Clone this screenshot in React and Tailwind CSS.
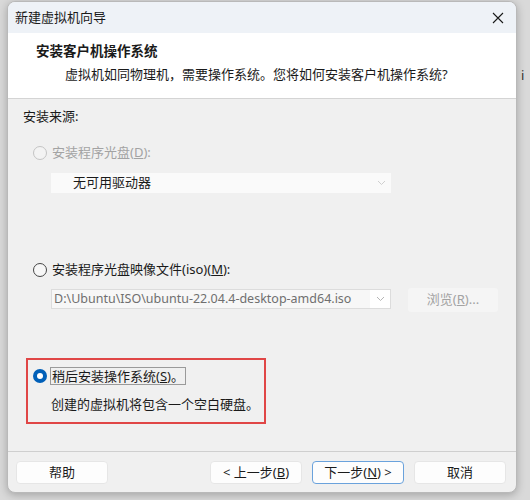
import React from 'react';

const font = { fontFamily: '"Segoe UI", "Noto Sans", "Noto Sans CJK SC", sans-serif' };

function Radio({ checked, disabled }) {
    if (checked) {
        return (
            <span className="w-[14px] h-[14px] rounded-full bg-[#005fb8] flex items-center justify-center shrink-0">
                <span className="w-[6px] h-[6px] rounded-full bg-white"></span>
            </span>
        );
    }
    return (
        <span
            className={
                "w-[14px] h-[14px] rounded-full border shrink-0 " +
                (disabled ? "border-[#c4c4c4] bg-[#f3f3f3]" : "border-[#454545] bg-[#f7f7f7]")
            }
        ></span>
    );
}

function Chevron({ color = "#b5b5b5" }) {
    return (
        <svg width="9" height="6" viewBox="0 0 9 6" fill="none">
            <path d="M1 1l3.5 3.5L8 1" stroke={color} strokeWidth="1" />
        </svg>
    );
}

function Btn({ children, focused }) {
    return (
        <button
            className={
                "h-[23px] w-[92px] rounded-[4px] bg-[#fdfdfd] text-[13px] text-[#1b1b1b] flex items-center justify-center border " +
                (focused ? "border-[#6aa2dc]" : "border-[#e6e6e6]")
            }
        >
            {children}
        </button>
    );
}

export default function App() {
    return (
        <div className="relative w-[530px] h-[500px] bg-[#d9d9d9] overflow-hidden pt-[1px]" style={font}>
            <span className="absolute left-[521px] top-[66px] text-[13px] text-[#333]">i</span>
            <div className="relative ml-[7px] w-[510px] h-[492px] rounded-[8px] border border-[#b9b9b9] bg-[#f0f0f0] overflow-hidden flex flex-col shadow-[0_2px_8px_rgba(0,0,0,0.25)]">
                {/* title bar */}
                <div className="h-[31px] bg-[#eef2f7] flex items-center justify-between pl-[7px] pr-[12px] shrink-0">
                    <span className="text-[13px] text-[#1a1a1a]">新建虚拟机向导</span>
                    <svg width="12" height="12" viewBox="0 0 12 12" fill="none">
                        <path d="M1 1l10 10M11 1L1 11" stroke="#1a1a1a" strokeWidth="1.1" />
                    </svg>
                </div>

                {/* header */}
                <div className="h-[66px] bg-white border-b border-[#d4d4d4] shrink-0 pt-[8px]">
                    <div className="pl-[28px] text-[13.5px] font-bold text-[#1a1a1a] leading-[20px]">安装客户机操作系统</div>
                    <div className="pl-[57px] text-[13px] text-[#1a1a1a] leading-[20px] mt-[3px]">
                        虚拟机如同物理机，需要操作系统。您将如何安装客户机操作系统?
                    </div>
                </div>

                {/* body */}
                <div className="flex-1 text-[13px] text-[#1a1a1a]">
                    <div className="pl-[15px] mt-[7px] leading-[20px]">安装来源:</div>

                    <div className="flex items-center gap-[5px] pl-[25px] mt-[17px] h-[20px] text-[#a3a3a3]">
                        <Radio disabled />
                        <span>安装程序光盘(<span className="underline">D</span>):</span>
                    </div>
                    <div className="ml-[43px] mt-[10px] w-[340px] h-[20px] bg-[#fafafa] flex items-center justify-between pl-[22px] pr-[5px]">
                        <span className="text-[#1a1a1a]">无可用驱动器</span>
                        <Chevron color="#cfcfcf" />
                    </div>

                    <div className="flex items-center gap-[5px] pl-[25px] mt-[67px] h-[20px]">
                        <Radio />
                        <span>安装程序光盘映像文件(iso)(<span className="underline">M</span>):</span>
                    </div>
                    <div className="flex items-start mt-[8px] ml-[43px]">
                        <div className="mt-[1px] w-[340px] h-[20px] bg-white border border-[#dcdcdc] flex items-center">
                            <div className="flex-1 h-full bg-[#f7f7f7] pl-[2px] flex items-center text-[12.5px] text-[#6f6f6f] whitespace-nowrap overflow-hidden">
                                D:\Ubuntu\ISO\ubuntu-22.04.4-desktop-amd64.iso
                            </div>
                            <div className="w-[20px] h-full flex items-center justify-center bg-white">
                                <Chevron />
                            </div>
                        </div>
                        <div className="ml-[17px] w-[90px] h-[24px] bg-[#f5f5f5] rounded-[3px] flex items-center justify-center text-[#a3a3a3]">
                            浏览(<span className="underline">R</span>)...
                        </div>
                    </div>

                    <div className="ml-[18px] mt-[46px] w-[240px] h-[66px] border-2 border-[#e04646]">
                        <div className="flex items-center gap-[3px] pl-[5px] mt-[7px] h-[18px]">
                            <Radio checked />
                            <span className="border border-[#9a9a9a] px-[1px] leading-[16px]">
                                稍后安装操作系统(<span className="underline">S</span>)。
                            </span>
                        </div>
                        <div className="pl-[23px] mt-[9px] leading-[20px]">创建的虚拟机将包含一个空白硬盘。</div>
                    </div>
                </div>

                {/* footer */}
                <div className="h-[41px] border-t border-[#cfcfcf] shrink-0 flex items-start justify-between pl-[8px] pr-[10px] pt-[9px]">
                    <Btn>帮助</Btn>
                    <div className="flex gap-[10px]">
                        <Btn>&lt; 上一步(<span className="underline">B</span>)</Btn>
                        <Btn focused>下一步(<span className="underline">N</span>) &gt;</Btn>
                        <Btn>取消</Btn>
                    </div>
                </div>
            </div>
        </div>
    );
}
